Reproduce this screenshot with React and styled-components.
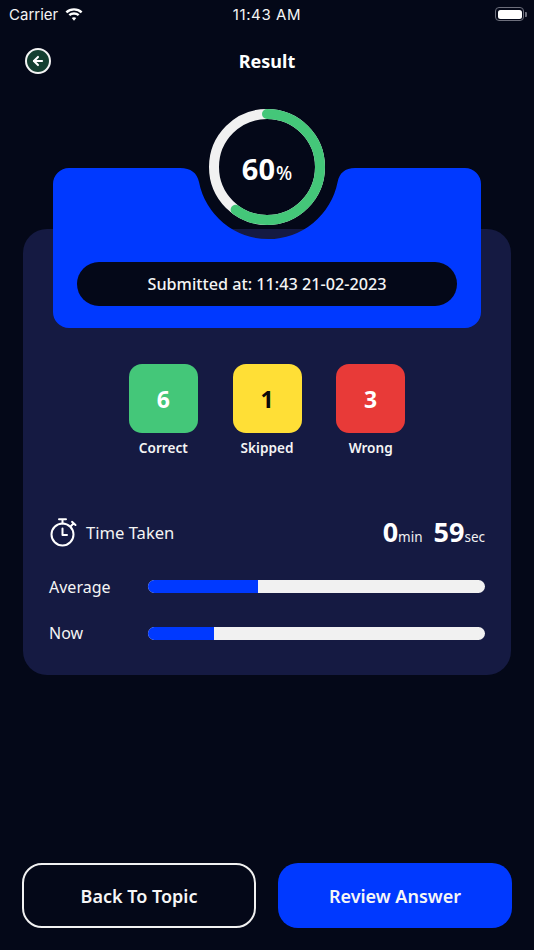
import React from 'react'
import styled, { createGlobalStyle } from 'styled-components'
import { ArrowLeft } from 'lucide-react'

const pageColor = '#040818'
const cardColor = '#151a42'
const blueColor = '#0039ff'
const greenColor = '#44c779'
const offWhite = '#f1f1f1'

const GlobalStyle = createGlobalStyle`
  * {
    margin: 0;
    padding: 0;
    box-sizing: border-box;
  }
  body {
    background: ${pageColor};
    font-family: "Noto Sans", sans-serif;
    color: #fff;
  }
`

const Page = styled.div`
  width: 534px;
  height: 950px;
  display: flex;
  flex-direction: column;
  overflow: hidden;
  background: ${pageColor};
`

const StatusBar = styled.div`
  height: 28px;
  padding: 0 7px 0 9px;
  display: grid;
  grid-template-columns: 1fr auto 1fr;
  align-items: center;
  font-family: "Inter", sans-serif;
  font-size: 15px;
  color: #f4f4f4;
`

const Carrier = styled.div`
  display: flex;
  align-items: center;
  gap: 7px;
`

const Clock = styled.span`
  margin-right: 2px;
  letter-spacing: 0.6px;
`

const BatteryBox = styled.div`
  justify-self: end;
  display: flex;
  align-items: center;
  gap: 1px;
`

const BatteryBody = styled.div`
  width: 29px;
  height: 14px;
  border: 1px solid #6d6f7c;
  border-radius: 4px;
  padding: 1.5px;

  &::before {
    content: "";
    display: block;
    height: 100%;
    background: #fff;
    border-radius: 2.5px;
  }
`

const BatteryTip = styled.div`
  width: 2px;
  height: 5px;
  background: #6d6f7c;
  border-radius: 0 1px 1px 0;
`

const Header = styled.header`
  height: 44px;
  margin-top: 11px;
  padding: 0 25px;
  display: grid;
  grid-template-columns: 1fr auto 1fr;
  align-items: center;

  h1 {
    font-size: 18px;
    font-weight: 700;
  }
`

const BackButton = styled.button`
  width: 26px;
  height: 26px;
  border: 2px solid #f4f4f4;
  border-radius: 50%;
  background: #143f30;
  color: #fff;
  display: flex;
  align-items: center;
  justify-content: center;
`

const Gauge = styled.div`
  position: relative;
  z-index: 2;
  width: 116px;
  height: 116px;
  margin: 26px auto 4px;
  display: grid;
  place-items: center;

  > * {
    grid-area: 1 / 1;
  }
`

const GaugeValue = styled.div`
  display: flex;
  align-items: baseline;
  font-size: 29px;
  font-weight: 700;
  line-height: 1;
  margin-top: 2px;

  span {
    margin-left: 1px;
    font-size: 19px;
    font-weight: 500;
  }
`

const Card = styled.section`
  margin: 0 23px;
  height: 446px;
  padding: 0 26px 0;
  background: ${cardColor};
  border-radius: 24px;
  display: flex;
  flex-direction: column;
`

const BluePanel = styled.div`
  width: 428px;
  height: 160px;
  margin: -61px 0 0 4px;
  padding: 0 24px 22px;
  flex-shrink: 0;
  background: ${blueColor};
  display: flex;
  align-items: flex-end;
  clip-path: path("M16 0 H127 C138 0 144 5 146 14 A70.6 70.6 0 0 0 284.6 14 C286.5 5 292 0 302 0 H412 A16 16 0 0 1 428 16 V144 A16 16 0 0 1 412 160 H16 A16 16 0 0 1 0 144 V16 A16 16 0 0 1 16 0 Z");
`

const SubmittedPill = styled.div`
  width: 100%;
  height: 44px;
  border-radius: 22px;
  background: ${pageColor};
  display: flex;
  align-items: center;
  justify-content: center;
  font-size: 16.2px;
  font-weight: 500;
  color: #f4f4f4;
`

const Stats = styled.div`
  margin-top: 36px;
  display: flex;
  justify-content: center;
  gap: 34.7px;
`

const Stat = styled.div`
  width: 69px;
  display: flex;
  flex-direction: column;
  align-items: center;
  gap: 5px;

  label {
    font-size: 13.6px;
    font-weight: 600;
    color: #f4f4f4;
    white-space: nowrap;
  }
`

const Tile = styled.div`
  width: 69px;
  height: 69px;
  border-radius: 13px;
  background: ${(p) => p.$bg};
  color: ${(p) => p.$fg};
  display: flex;
  align-items: center;
  justify-content: center;
  font-size: 23px;
  font-weight: 700;
`

const TimeRow = styled.div`
  margin: 59px 0 0 1px;
  display: flex;
  align-items: center;
  justify-content: space-between;
`

const TimeLabel = styled.div`
  display: flex;
  align-items: center;
  gap: 9px;
  font-size: 16.6px;
  color: #f4f4f4;
`

const TimeValue = styled.div`
  display: flex;
  align-items: baseline;
  gap: 11px;
`

const TimePart = styled.div`
  display: flex;
  align-items: baseline;
  font-size: 27px;
  font-weight: 700;
  line-height: 1.2;

  small {
    font-size: 13.5px;
    font-weight: 400;
    color: #f1f1f1;
  }
`

const Bars = styled.div`
  margin-top: 26.5px;
  display: flex;
  flex-direction: column;
  gap: 22.5px;
`

const BarRow = styled.div`
  height: 24px;
  display: grid;
  grid-template-columns: 99px 1fr;
  align-items: center;
  font-size: 16px;
  color: #f4f4f4;
`

const Track = styled.div`
  height: 13px;
  border-radius: 7px;
  background: ${offWhite};
  overflow: hidden;
`

const Fill = styled.div`
  height: 100%;
  background: ${blueColor};
`

const Footer = styled.footer`
  margin-top: auto;
  padding: 0 22px 22px;
  display: flex;
  justify-content: space-between;
`

const ActionButton = styled.button`
  width: 234px;
  height: 65px;
  border-radius: 20px;
  border: ${(p) => (p.$primary ? 'none' : '2px solid #f1f1f1')};
  background: ${(p) => (p.$primary ? blueColor : 'transparent')};
  color: #f6f6f6;
  font-family: "Noto Sans", sans-serif;
  font-size: 18px;
  font-weight: 600;
`

const WifiIcon = () => (
  <svg width="18" height="13" viewBox="0 0 20 15" fill="none" stroke="#fff" strokeWidth="2.8">
    <path d="M1.2 5 C6 0.4 14 0.4 18.8 5" />
    <path d="M4.6 8.3 C7.6 5.6 12.4 5.6 15.4 8.3" />
    <path d="M10 14.6 L7.4 11.5 C8.8 10.4 11.2 10.4 12.6 11.5 Z" fill="#fff" stroke="none" />
  </svg>
)

const StopwatchIcon = () => (
  <svg width="27" height="29" viewBox="0 0 27 29" fill="none" stroke="#fff" strokeWidth="2" strokeLinecap="round" strokeLinejoin="round">
    <circle cx="12.5" cy="16.5" r="11" />
    <path d="M12.5 5.5 V1.5 M9 1.2 H16" />
    <path d="M21 8 L23.5 5.5 M22 3.8 L25.5 7" />
    <path d="M12.5 10.5 V17 H17" />
  </svg>
)

const ProgressRing = ({ percent }) => {
  const radius = 53
  const circumference = 2 * Math.PI * radius
  return (
    <svg width="116" height="116" viewBox="0 0 116 116" fill="none" strokeWidth="10">
      <circle cx="58" cy="58" r={radius} stroke={offWhite} />
      <circle
        cx="58"
        cy="58"
        r={radius}
        stroke={greenColor}
        strokeLinecap="round"
        strokeDasharray={`${(circumference * percent) / 100} ${circumference}`}
        transform="rotate(-90 58 58)"
      />
    </svg>
  )
}

const stats = [
  { value: 6, label: 'Correct', bg: greenColor, fg: '#fff' },
  { value: 1, label: 'Skipped', bg: '#ffdf36', fg: '#0a0a0a' },
  { value: 3, label: 'Wrong', bg: '#e83a38', fg: '#fff' },
]

const bars = [
  { label: 'Average', percent: 32.7 },
  { label: 'Now', percent: 19.6 },
]

const App = () => {
  return (
    <Page>
      <GlobalStyle />
      <StatusBar>
        <Carrier>
          Carrier
          <WifiIcon />
        </Carrier>
        <Clock>11:43 AM</Clock>
        <BatteryBox>
          <BatteryBody />
          <BatteryTip />
        </BatteryBox>
      </StatusBar>
      <Header>
        <BackButton aria-label="Back">
          <ArrowLeft size={14} strokeWidth={3.5} />
        </BackButton>
        <h1>Result</h1>
      </Header>
      <Gauge>
        <ProgressRing percent={60} />
        <GaugeValue>
          60<span>%</span>
        </GaugeValue>
      </Gauge>
      <Card>
        <BluePanel>
          <SubmittedPill>Submitted at: 11:43 21-02-2023</SubmittedPill>
        </BluePanel>
        <Stats>
          {stats.map((s) => (
            <Stat key={s.label}>
              <Tile $bg={s.bg} $fg={s.fg}>{s.value}</Tile>
              <label>{s.label}</label>
            </Stat>
          ))}
        </Stats>
        <TimeRow>
          <TimeLabel>
            <StopwatchIcon />
            Time Taken
          </TimeLabel>
          <TimeValue>
            <TimePart>0<small>min</small></TimePart>
            <TimePart>59<small>sec</small></TimePart>
          </TimeValue>
        </TimeRow>
        <Bars>
          {bars.map((b) => (
            <BarRow key={b.label}>
              {b.label}
              <Track>
                <Fill style={{ width: `${b.percent}%` }} />
              </Track>
            </BarRow>
          ))}
        </Bars>
      </Card>
      <Footer>
        <ActionButton>Back To Topic</ActionButton>
        <ActionButton $primary>Review Answer</ActionButton>
      </Footer>
    </Page>
  )
}

export default App
